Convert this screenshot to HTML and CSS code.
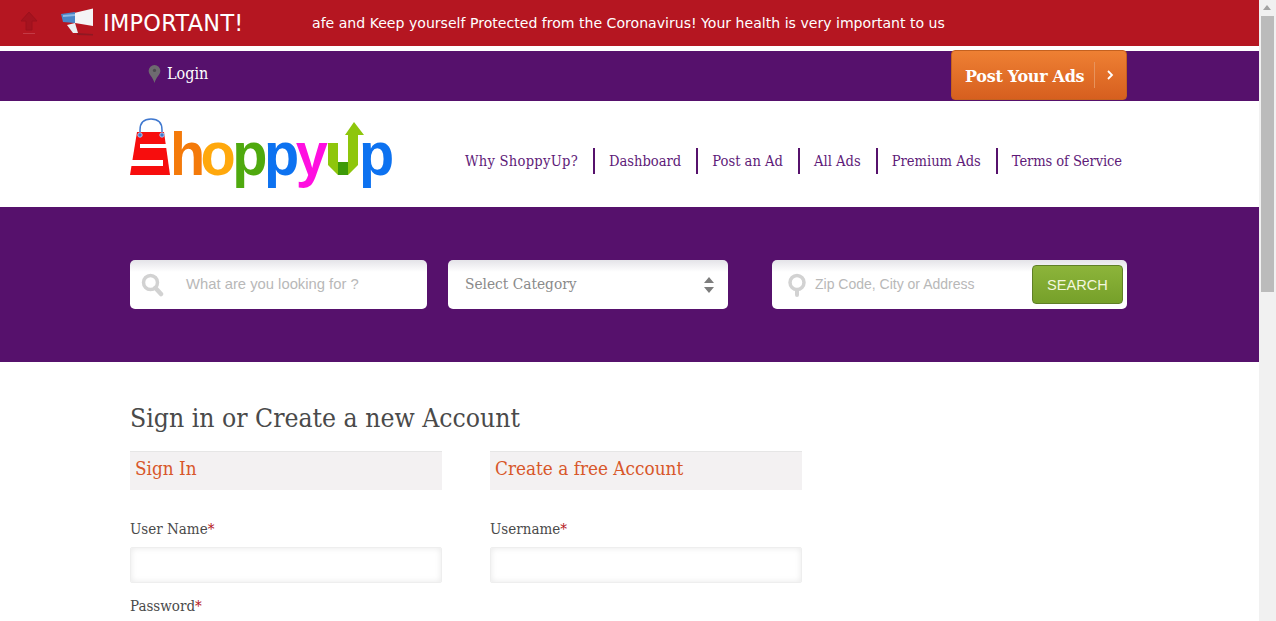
FILE: index.html
```html
<!DOCTYPE html>
<html>
<head>
  <title>ShoppyUp</title>
  <link rel="stylesheet" href="styles.css">
</head>
<body>
  <div class="page">
    <div class="alert">
      <svg class="alert-up" width="20" height="24" viewBox="0 0 20 24">
        <path d="M10 1 L18 10 H13 V19 H7 V10 H2 Z" fill="#a5131f" stroke="#9c111c"/>
        <rect x="4" y="22" width="12" height="1" fill="#c43a45"/>
      </svg>
      <svg class="alert-horn" width="34" height="28" viewBox="0 0 34 28">
        <path d="M16 25 L32 26 V27.500 L16 27 Z" fill="#8f1822"/>
        <path d="M6 17 L14 15 L17 25 L12 25 Z" fill="#eceff2"/>
        <path d="M13 5 L32 0.500 V18 L14 15 Z" fill="#f4f4f6"/>
        <path d="M0 6 L14 4 V15 L2 14 Z" fill="#4a86c8"/>
        <path d="M2 7 L14 6 V8 L2 9 Z" fill="#8db8e4"/>
      </svg>
      <div class="alert-title">IMPORTANT!</div>
      <div class="alert-scroll">afe and Keep yourself Protected from the Coronavirus! Your health is very important to us</div>
    </div>

    <div class="topbar">
      <div class="wrap topbar-in">
        <a class="login">
          <svg width="13" height="18" viewBox="0 0 14 20">
            <path d="M7 0 A6.500 6.500 0 0 1 13.500 6.500 C13.500 11 9 13 7 20 C5 13 0.500 11 0.500 6.500 A6.500 6.500 0 0 1 7 0 Z" fill="#6e6a70"/>
            <circle cx="7" cy="6" r="1.800" fill="#4d4a50"/>
          </svg>
          Login
        </a>
        <a class="post-btn"><span class="post-label">Post Your Ads</span><span class="post-arrow">
          <svg width="8" height="10" viewBox="0 0 8 10"><path d="M2 1 L6 5 L2 9" fill="none" stroke="#fff" stroke-width="1.800"/></svg>
        </span></a>
      </div>
    </div>

    <div class="wrap head">
      <svg class="logo" width="264" height="70" viewBox="0 0 264 70">
        <path d="M10 17 V12 Q10 1 21 1 Q32 1 32 12 V17" fill="none" stroke="#3f78cf" stroke-width="1.500"/>
        <path d="M7 14 H34 L40 57 H0 Z" fill="#f70d0d"/>
        <rect x="10" y="26" width="31" height="4" fill="#fff"/>
        <rect x="0" y="42" width="33" height="6" fill="#fff"/>
        <circle cx="10" cy="17" r="2.200" fill="#3f78cf" stroke="#a9c6ee"/>
        <circle cx="32" cy="17" r="2.200" fill="#3f78cf" stroke="#a9c6ee"/>
        <text class="logo-txt" transform="translate(40 57) scale(.93 1)"><tspan fill="#f47a0a">h</tspan><tspan fill="#ffa80c" dx="-1.500">o</tspan><tspan fill="#4fa90e">p</tspan><tspan fill="#0d72f0">p</tspan><tspan fill="#ff0fe0">y</tspan></text>
        <path d="M198 25 H208 V44 H218 V17 H215 L224 4 L234 17 H228 V47 L218 57 H208 L198 47 Z" fill="#8ec60c"/>
        <rect x="208" y="44" width="10" height="13" fill="#3d9a08"/>
        <text class="logo-txt" transform="translate(229 57) scale(.93 1)" fill="#0d72f0">p</text>
      </svg>
      <ul class="nav">
        <li>Why ShoppyUp?</li>
        <li>Dashboard</li>
        <li>Post an Ad</li>
        <li>All Ads</li>
        <li>Premium Ads</li>
        <li>Terms of Service</li>
      </ul>
    </div>

    <div class="search-band">
      <div class="wrap search-row">
        <div class="box box-what">
          <svg width="24" height="24" viewBox="0 0 24 24"><circle cx="9.500" cy="9.500" r="7" fill="none" stroke="#d2d2d2" stroke-width="3.500"/><path d="M14.500 15 L20 21" stroke="#d2d2d2" stroke-width="4.500" stroke-linecap="round"/></svg>
          <span class="ph">What are you looking for ?</span>
        </div>
        <div class="box box-cat">
          <span class="cat-label">Select Category</span>
          <svg width="10" height="16" viewBox="0 0 10 16"><path d="M5 0 L10 6 H0 Z M0 10 H10 L5 16 Z" fill="#7d7d7d"/></svg>
        </div>
        <div class="box box-zip">
          <svg width="18" height="24" viewBox="0 0 18 24"><path d="M9 22 V17" stroke="#d2d2d2" stroke-width="4" stroke-linecap="round"/><circle cx="9" cy="9.500" r="7" fill="none" stroke="#d2d2d2" stroke-width="3.500"/></svg>
          <span class="ph ph-zip">Zip Code, City or Address</span>
          <button class="search-btn">SEARCH</button>
        </div>
      </div>
    </div>

    <div class="wrap main">
      <h1>Sign in or Create a new Account</h1>
      <div class="cols">
        <div class="col">
          <h2>Sign In</h2>
          <label>User Name<i>*</i></label>
          <div class="field"></div>
          <label class="second">Password<i>*</i></label>
        </div>
        <div class="col">
          <h2>Create a free Account</h2>
          <label>Username<i>*</i></label>
          <div class="field"></div>
          <label class="third">Email<i>*</i></label>
        </div>
      </div>
    </div>
  </div>

  <div class="scrollbar">
    <div class="sb-arrow"></div>
    <div class="sb-thumb"></div>
  </div>
</body>
</html>
```

FILE: styles.css
```css
html, body {
  margin: 0;
  padding: 0;
  height: 621px;
  overflow: hidden;
  background: #fff;
}
body {
  font-family: "DejaVu Serif Condensed", "DejaVu Serif", serif;
  color: #4a4a4a;
}
.page {
  width: 1259px;
  height: 621px;
  overflow: hidden;
}
.wrap {
  width: 997px;
  margin-left: 130px;
}

/* alert strip */
.alert {
  height: 46px;
  background: #b51621;
  display: flex;
  align-items: center;
  color: #fff;
}
.alert-up {
  margin-left: 19px;
}
.alert-horn {
  margin-left: 22px;
  margin-top: -2px;
}
.alert-title {
  font-family: "DejaVu Sans", sans-serif;
  font-size: 22.400px;
  letter-spacing: 0.300px;
  margin-left: 8px;
  width: 209px;
}
.alert-scroll {
  white-space: nowrap;
  font-family: "DejaVu Sans", sans-serif;
  font-size: 14.080px;
}

/* login bar */
.topbar {
  margin-top: 5px;
  height: 50px;
  background: #56116c;
}
.topbar-in {
  display: flex;
  justify-content: space-between;
  height: 50px;
}
.login {
  display: flex;
  align-items: center;
  gap: 6px;
  margin-left: 18px;
  margin-top: -5px;
  color: #fff;
  font-size: 16px;
}
.post-btn {
  display: flex;
  align-items: center;
  width: 176px;
  height: 50px;
  margin-top: -1px;
  box-sizing: border-box;
  background: linear-gradient(#ee8033, #d65f1f);
  border: 1px solid #c4611f;
  border-radius: 4px;
  color: #fff;
}
.post-label {
  font-family: "DejaVu Serif", serif;
  font-weight: bold;
  font-size: 16px;
  white-space: nowrap;
  margin-left: 13px;
  margin-top: 2px;
  width: 129px;
  letter-spacing: -0.300px;
}
.post-arrow {
  display: flex;
  align-items: center;
  justify-content: center;
  width: 30px;
  height: 26px;
  border-left: 1px solid #e7935c;
}

/* logo and nav */
.head {
  height: 106px;
  display: flex;
  align-items: flex-start;
  justify-content: space-between;
}
.logo {
  margin-top: 17px;
}
.logo-txt {
  font-family: "Liberation Sans", sans-serif;
  font-weight: 700;
  font-size: 62px;
  letter-spacing: -3.700px;
}
.nav {
  list-style: none;
  margin: 47px 5px 0 0;
  padding: 0;
  display: flex;
  color: #5e1a78;
  font-size: 14.600px;
}
.nav li {
  height: 26px;
  line-height: 26px;
  padding: 0 15px 0 14px;
  border-left: 2px solid #56116c;
  white-space: nowrap;
}
.nav li:first-child {
  border-left: 0;
  letter-spacing: 0.250px;
}
.nav li:last-child {
  padding-right: 0;
  letter-spacing: -0.100px;
}

/* search band */
.search-band {
  height: 155px;
  background: #56116c;
}
.search-row {
  display: flex;
  padding-top: 53px;
}
.box {
  height: 49px;
  box-sizing: border-box;
  background: linear-gradient(#e4e3e8, #fff 12px);
  border-radius: 5px;
  display: flex;
  align-items: center;
}
.box-what {
  width: 297px;
  padding-left: 11px;
}
.ph {
  font-family: "Liberation Sans", sans-serif;
  font-size: 14.800px;
  color: #b8b8b8;
  margin-left: 21px;
  margin-top: -2px;
}
.box-cat {
  width: 280px;
  margin-left: 21px;
  padding: 0 14px 0 17px;
  justify-content: space-between;
}
.cat-label {
  font-size: 15.300px;
  color: #8a8a8a;
  margin-top: -2px;
}
.box-zip {
  width: 355px;
  margin-left: 44px;
  padding-left: 16px;
}
.ph-zip {
  font-size: 14px;
  margin-left: 9px;
  flex: 1;
}
.search-btn {
  width: 91px;
  height: 39px;
  margin-right: 4px;
  padding: 0;
  border: 1px solid #5f7f27;
  border-radius: 4px;
  background: linear-gradient(#8cb43a, #76a02a);
  color: #f3f7df;
  font-family: "Liberation Sans", sans-serif;
  font-size: 14.600px;
}

/* account forms */
h1 {
  margin: 0;
  padding-top: 40px;
  font-size: 26.300px;
  font-weight: normal;
  line-height: 32px;
  color: #4a4a4a;
}
.cols {
  display: flex;
  gap: 48px;
  margin-top: 17px;
}
.col {
  width: 312px;
}
h2 {
  margin: 0;
  height: 38px;
  padding-left: 5px;
  border-top: 1px solid #e6e6e6;
  background: #f3f1f2;
  font-size: 18.800px;
  font-weight: normal;
  line-height: 33px;
  color: #d8572a;
}
label {
  display: block;
  margin-top: 29px;
  font-size: 15px;
  line-height: 20px;
}
label i {
  font-style: normal;
  color: #b51621;
}
.field {
  height: 34px;
  margin-top: 8px;
  border: 1px solid #eee;
  border-radius: 2px;
  box-shadow: inset 0 0 6px #e8e8e8;
}
label.second {
  margin-top: 13px;
}
label.third {
  margin-top: 35px;
}

/* page scrollbar */
.scrollbar {
  position: fixed;
  top: 0;
  right: 0;
  width: 17px;
  height: 621px;
  background: #f1f1f1;
}
.sb-arrow {
  height: 16px;
  position: relative;
}
.sb-arrow::after {
  content: "";
  position: absolute;
  left: 4px;
  top: 5px;
  border: 4px solid transparent;
  border-top: 0;
  border-bottom: 5px solid #a3a3a3;
}
.sb-thumb {
  width: 13px;
  height: 276px;
  margin-left: 2px;
  background: #bbb;
}
```
